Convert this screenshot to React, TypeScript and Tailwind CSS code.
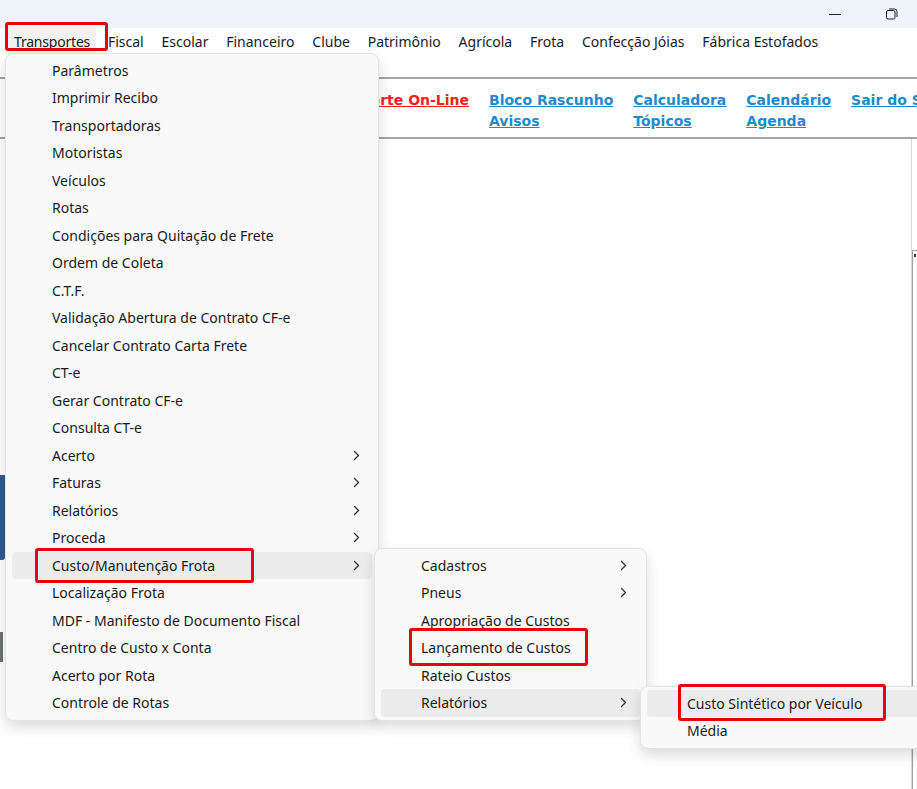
import React from "react";

const mainItems: { label: string; sub?: boolean }[] = [
  { label: "Parâmetros" },
  { label: "Imprimir Recibo" },
  { label: "Transportadoras" },
  { label: "Motoristas" },
  { label: "Veículos" },
  { label: "Rotas" },
  { label: "Condições para Quitação de Frete" },
  { label: "Ordem de Coleta" },
  { label: "C.T.F." },
  { label: "Validação Abertura de Contrato CF-e" },
  { label: "Cancelar Contrato Carta Frete" },
  { label: "CT-e" },
  { label: "Gerar Contrato CF-e" },
  { label: "Consulta CT-e" },
  { label: "Acerto", sub: true },
  { label: "Faturas", sub: true },
  { label: "Relatórios", sub: true },
  { label: "Proceda", sub: true },
  { label: "Custo/Manutenção Frota", sub: true },
  { label: "Localização Frota" },
  { label: "MDF - Manifesto de Documento Fiscal" },
  { label: "Centro de Custo x Conta" },
  { label: "Acerto por Rota" },
  { label: "Controle de Rotas" },
];

const custoItems: { label: string; sub?: boolean }[] = [
  { label: "Cadastros", sub: true },
  { label: "Pneus", sub: true },
  { label: "Apropriação de Custos" },
  { label: "Lançamento de Custos" },
  { label: "Rateio Custos" },
  { label: "Relatórios", sub: true },
];

const topMenu = [
  "Transportes",
  "Fiscal",
  "Escolar",
  "Financeiro",
  "Clube",
  "Patrimônio",
  "Agrícola",
  "Frota",
  "Confecção Jóias",
  "Fábrica Estofados",
];

function Chevron() {
  return (
    <svg width="7" height="11" viewBox="0 0 7 11" fill="none">
      <path d="M1.5 1.5l4 4-4 4" stroke="#333" strokeWidth="1.3" strokeLinecap="round" strokeLinejoin="round" />
    </svg>
  );
}

function MenuRow({ label, sub, active, textPad, chevronRight }: { label: string; sub?: boolean; active?: boolean; textPad: string; chevronRight: string }) {
  return (
    <div className={`relative h-[27.5px] mx-[6px] rounded-[4px] flex items-center ${active ? "bg-[#ececec]" : ""}`}>
      <span className={`${textPad} whitespace-nowrap`}>{label}</span>
      {sub && <span className={`absolute ${chevronRight} top-[8px]`}><Chevron /></span>}
    </div>
  );
}

function RedBox({ className }: { className: string }) {
  return <div className={`absolute border-[3px] border-[#e8000b] rounded-[3px] pointer-events-none ${className}`} />;
}

function LinkCol({ top, bottom, red }: { top: string; bottom?: string; red?: boolean }) {
  const color = red ? "text-[#f51c1c] decoration-[#f51c1c]" : "text-[#1b8bd0] decoration-[#1b8bd0]";
  return (
    <div className={`flex flex-col leading-[21px] font-bold underline ${color}`}>
      <span className="whitespace-nowrap">{top}</span>
      {bottom && <span className="whitespace-nowrap">{bottom}</span>}
    </div>
  );
}

export default function App() {
  return (
    <div className="relative w-[917px] h-[789px] overflow-hidden bg-white text-[14px] text-[#1a1a1a] font-['Noto_Sans',sans-serif]">
      {/* title bar */}
      <div className="h-[28px] bg-[#eff4f9] flex items-center justify-end pr-[19px] gap-[45px]">
        <div className="w-[12px] h-[1px] bg-[#222]" />
        <svg width="12" height="12" viewBox="0 0 12 12" fill="none">
          <rect x="0.5" y="2.5" width="8.5" height="8.5" rx="1.5" stroke="#222" />
          <path d="M3 1h5.5A2.5 2.5 0 0 1 11 3.5V9" stroke="#222" />
        </svg>
      </div>

      {/* menu bar */}
      <div className="h-[27px] flex items-center pl-[14px] gap-[17.8px]">
        {topMenu.map((m, i) => (
          <span key={m} className={`whitespace-nowrap ${i === 0 ? "relative tracking-[-0.2px]" : ""}`}>
            {i === 0 && <span className="absolute -left-[6px] -right-[6px] -top-[4px] -bottom-[4px] bg-[#f2f2f2]" />}
            <span className="relative">{m}</span>
          </span>
        ))}
      </div>

      <div className="h-[22px]" />

      {/* toolbar */}
      <div className="h-[62px] border-t-2 border-b-2 border-[#a6a6a6] flex items-start pt-[11px] gap-[20px] text-[14px] font-['DejaVu_Sans',sans-serif]">
        <div className="w-[469px] flex justify-end shrink-0">
          <LinkCol top="Suporte On-Line" red />
        </div>
        <LinkCol top="Bloco Rascunho" bottom="Avisos" />
        <LinkCol top="Calculadora" bottom="Tópicos" />
        <LinkCol top="Calendário" bottom="Agenda" />
        <LinkCol top="Sair do Sistema" />
      </div>

      {/* body */}
      <div className="flex h-[650px]">
        <div className="w-[5px] flex flex-col">
          <div className="h-[336px]" />
          <div className="h-[85px] w-[5px] bg-[#2f5a8c] rounded-br-[3px]" />
          <div className="h-[72px]" />
          <div className="h-[30px] w-[3px] bg-[#6f7370]" />
        </div>
        <div className="flex-1 border-r border-[#d9d9d9]" />
        <div className="w-[5px] flex flex-col">
          <div className="h-[111px]" />
          <div className="flex-1 border-l border-t border-[#a0a0a0] relative">
            <div className="absolute left-[1px] top-[3px] w-[2px] h-[3px] bg-[#333]" />
          </div>
        </div>
      </div>

      {/* main dropdown */}
      <div className="absolute left-[5px] top-[53px] w-[374px] bg-[#f9f9f9] border border-[#e3e3e3] rounded-[8px] shadow-[0_6px_14px_rgba(0,0,0,0.14)] pt-[2.5px] pb-[3px]">
        {mainItems.map((it) => (
          <MenuRow key={it.label} label={it.label} sub={it.sub} active={it.label === "Custo/Manutenção Frota"} textPad="pl-[40px]" chevronRight="right-[12px]" />
        ))}
      </div>

      {/* custo submenu */}
      <div className="absolute left-[374px] top-[548px] w-[273px] bg-[#f9f9f9] border border-[#e3e3e3] rounded-[8px] shadow-[0_6px_14px_rgba(0,0,0,0.14)] pt-[2.5px] pb-[3px]">
        {custoItems.map((it) => (
          <MenuRow key={it.label} label={it.label} sub={it.sub} active={it.label === "Relatórios"} textPad="pl-[40px]" chevronRight="right-[13px]" />
        ))}
      </div>

      {/* relatorios submenu */}
      <div className="absolute left-[640px] top-[686px] w-[300px] bg-[#f9f9f9] border border-[#e3e3e3] rounded-[8px] shadow-[0_6px_14px_rgba(0,0,0,0.14)] pt-[2.5px] pb-[3px]">
        <MenuRow label="Custo Sintético por Veículo" active textPad="pl-[40px]" chevronRight="right-[13px]" />
        <MenuRow label="Média" textPad="pl-[40px]" chevronRight="right-[13px]" />
      </div>

      {/* highlight boxes */}
      <RedBox className="left-[5px] top-[22px] w-[103px] h-[29px]" />
      <RedBox className="left-[35px] top-[548px] w-[219px] h-[35px]" />
      <RedBox className="left-[409px] top-[628px] w-[179px] h-[38px]" />
      <RedBox className="left-[678px] top-[684px] w-[208px] h-[37px]" />
    </div>
  );
}
